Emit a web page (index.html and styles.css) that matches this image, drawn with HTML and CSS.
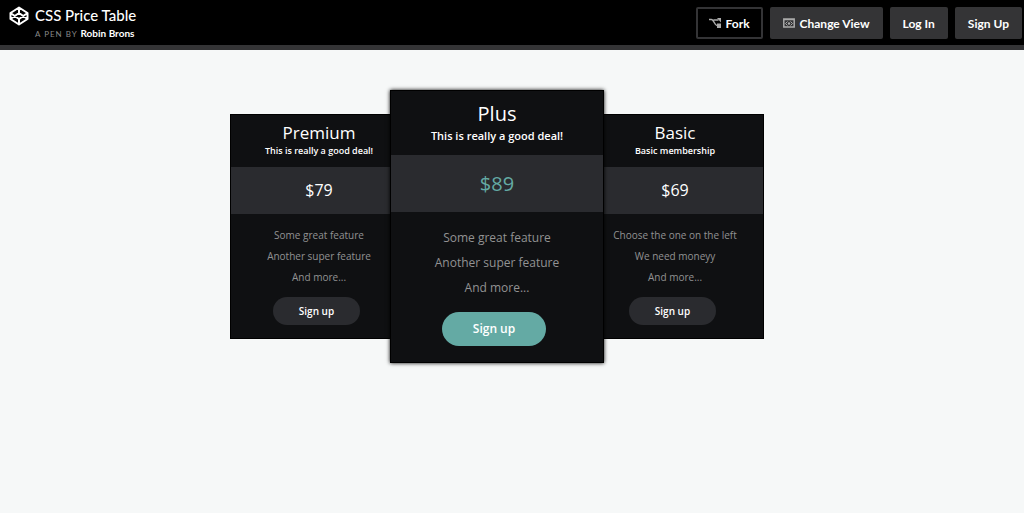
FILE: index.html
```html
<!DOCTYPE html>
<html lang="en">
<head>
  <meta charset="utf-8">
  <title>CSS Price Table</title>
  <link rel="stylesheet" href="styles.css">
</head>
<body>
  <header class="topbar">
    <svg class="logo" viewBox="0 0 20 20" width="20" height="20" aria-hidden="true">
      <path d="M10 1.500 18.500 7v6L10 18.500 1.500 13V7zM10 1.500V7M10 13v5.500M1.500 7 10 13l8.500-6M1.500 13 10 7l8.500 6"/>
    </svg>
    <div class="pen">
      <h1>CSS Price Table</h1>
      <p>A PEN BY <a href="#">Robin Brons</a></p>
    </div>
    <nav class="actions">
      <button class="action fork" type="button">
        <svg viewBox="0 0 12 10" width="12" height="10" aria-hidden="true">
          <path class="line" d="M0 1.500h2.500C5 1.500 5.500 7.500 8 7.500h1.500M4.500 2h5"/>
          <path class="solid" d="M8 0h4v4.500zM8 5.500l4 0v4.500H8z"/>
        </svg>
        Fork
      </button>
      <button class="action" type="button">
        <svg viewBox="0 0 12 10" width="12" height="10" aria-hidden="true">
          <path class="line" d="M.8 1h10.400v8H.8zM.8 1.500h10.400"/>
          <path class="thin" d="M4.500 3.500 2.500 5.500l2 2M7.500 3.500l2 2-2 2"/>
          <circle class="solid" cx="6" cy="5.500" r="1.200"/>
        </svg>
        Change View
      </button>
      <a class="action" href="#">Log In</a>
      <a class="action" href="#">Sign Up</a>
    </nav>
  </header>

  <main class="price-table">
    <section class="plan">
      <div class="plan-head">
        <h2>Premium</h2>
        <p>This is really a good deal!</p>
      </div>
      <div class="price">$79</div>
      <ul class="features">
        <li>Some great feature</li>
        <li>Another super feature</li>
        <li>And more...</li>
      </ul>
      <a class="signup" href="#">Sign up</a>
    </section>

    <section class="plan featured">
      <div class="plan-head">
        <h2>Plus</h2>
        <p>This is really a good deal!</p>
      </div>
      <div class="price">$89</div>
      <ul class="features">
        <li>Some great feature</li>
        <li>Another super feature</li>
        <li>And more...</li>
      </ul>
      <a class="signup" href="#">Sign up</a>
    </section>

    <section class="plan">
      <div class="plan-head">
        <h2>Basic</h2>
        <p>Basic membership</p>
      </div>
      <div class="price">$69</div>
      <ul class="features">
        <li>Choose the one on the left</li>
        <li>We need moneyy</li>
        <li>And more...</li>
      </ul>
      <a class="signup" href="#">Sign up</a>
    </section>
  </main>
</body>
</html>
```
FILE: styles.css
```css
* {
  box-sizing: border-box;
}

body {
  margin: 0;
  background: #f6f8f8;
  font-family: "Open Sans", sans-serif;
}

h1, h2, p, ul {
  margin: 0;
  padding: 0;
  font-weight: normal;
}

a {
  color: inherit;
  text-decoration: none;
}

/* top bar */
.topbar {
  display: flex;
  align-items: flex-start;
  padding: 6px 2px 2px 9px;
  background: #000;
  border-bottom: 5px solid #343436;
  color: #fff;
  font-family: Lato, sans-serif;
}

.logo {
  margin-right: 6px;
  fill: none;
  stroke: #fff;
  stroke-width: 2;
  stroke-linejoin: round;
}

.pen h1 {
  font-size: 15px;
  font-weight: 500;
  line-height: 18px;
}

.pen p {
  font-size: 8px;
  line-height: 18px;
  letter-spacing: 1px;
  color: #888;
}

.pen a {
  font-size: 10px;
  font-weight: bold;
  letter-spacing: 0;
  color: #fff;
}

.actions {
  display: flex;
  gap: 7px;
  margin-left: auto;
  padding-top: 1px;
}

.action {
  display: flex;
  align-items: center;
  gap: 5px;
  height: 32px;
  padding: 0 13px;
  border: 0;
  border-radius: 2px;
  background: #343436;
  color: #fff;
  font: bold 12px Lato, sans-serif;
  cursor: pointer;
}

.fork {
  padding: 0 11px;
  border: 2px solid #343436;
  background: #000;
}

.action .line,
.action .thin {
  fill: none;
  stroke: #aaa;
  stroke-width: 1.5;
}

.action .thin {
  stroke-width: 1;
}

.action .solid {
  fill: #aaa;
}

/* plans */
.price-table {
  display: flex;
  justify-content: center;
  align-items: center;
  padding: 40px 30px 40px 0;
}

.plan {
  width: 178px;
  padding-bottom: 13px;
  background: #0f1012;
  border: 1px solid #000;
  color: #fff;
  text-align: center;
}

.plan-head {
  padding: 7px 0 9px;
}

.plan h2 {
  font-size: 17px;
  line-height: 22px;
}

.plan-head p {
  font-size: 9px;
  font-weight: 600;
  line-height: 14px;
}

.price {
  background: #2a2b2f;
  font-size: 16px;
  line-height: 47px;
}

.features {
  padding: 11px 0 9px;
  list-style: none;
  color: #929292;
  font-size: 10px;
  line-height: 21px;
}

.signup {
  display: inline-block;
  margin-right: 5px;
  padding: 0 26px;
  border-radius: 14px;
  background: #2a2b2f;
  font-size: 10px;
  font-weight: 600;
  line-height: 28px;
  vertical-align: top;
}

.featured {
  z-index: 1;
  width: 214px;
  margin: 0 -18px;
  padding-bottom: 16px;
  box-shadow: 0 0 4px #000;
}

.featured .plan-head {
  padding: 9px 0 11px;
}

.featured h2 {
  font-size: 20px;
  line-height: 27px;
}

.featured .plan-head p {
  font-size: 11px;
  line-height: 17px;
}

.featured .price {
  color: #64aaa4;
  font-size: 20px;
  line-height: 57px;
}

.featured .features {
  padding: 13px 0 12px;
  font-size: 12px;
  line-height: 25px;
}

.featured .signup {
  margin-right: 6px;
  padding: 0 31px;
  border-radius: 17px;
  background: #64aaa4;
  font-size: 12px;
  line-height: 34px;
}
```
